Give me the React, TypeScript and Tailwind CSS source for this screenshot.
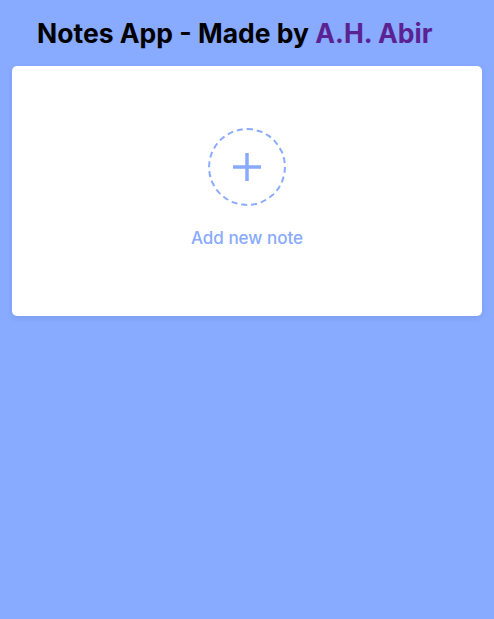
export default function App() {
  return (
    <div className="min-h-screen bg-[#88aaff] font-['Inter',sans-serif] px-3">
      <h1 className="pl-[25px] pt-[14px] pb-[14px] text-[26.5px] leading-[38px] font-bold text-black">
        Notes App - Made by <span className="text-[#5b2291]">A.H. Abir</span>
      </h1>

      {/* Add note card */}
      <div className="h-[250px] bg-white rounded-[5px] shadow-[0_2px_6px_rgba(0,0,0,0.08)] flex flex-col items-center justify-center">
        <div className="w-[78px] h-[78px] rounded-full border-2 border-dashed border-[#88aaff] flex items-center justify-center mt-[-6px]">
          <svg width="28" height="28" viewBox="0 0 28 28" fill="none" stroke="#88aaff" strokeWidth="3.5">
            <path d="M14 0v28M0 14h28" />
          </svg>
        </div>
        <p className="mt-[22px] text-[17px] leading-5 font-medium text-[#88aaff]">Add new note</p>
      </div>
    </div>
  );
}
